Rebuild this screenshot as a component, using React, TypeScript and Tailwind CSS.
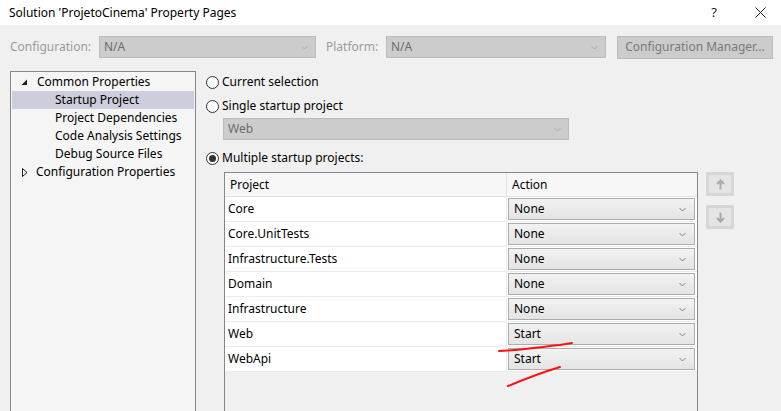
import React from "react";

const font = { fontFamily: '"Noto Sans", "Liberation Sans", sans-serif' };

function Chevron({ color = "#707070" }: { color?: string }) {
  return (
    <svg width="7" height="5" viewBox="0 0 7 5" className="shrink-0">
      <path d="M0.5 1 L3.5 4 L6.5 1" fill="none" stroke={color} strokeWidth="1" />
    </svg>
  );
}

function Radio({ checked, label }: { checked?: boolean; label: string }) {
  return (
    <div className="flex items-center h-[20px]">
      <div className="w-[13px] h-[13px] rounded-full border border-[#333333] bg-white flex items-center justify-center">
        {checked && <div className="w-[7px] h-[7px] rounded-full bg-[#333333]" />}
      </div>
      <span className="ml-[3px] text-[12px] text-black leading-none">{label}</span>
    </div>
  );
}

const rows: [string, string][] = [
  ["Core", "None"],
  ["Core.UnitTests", "None"],
  ["Infrastructure.Tests", "None"],
  ["Domain", "None"],
  ["Infrastructure", "None"],
  ["Web", "Start"],
  ["WebApi", "Start"],
];

export default function App() {
  return (
    <div className="w-[781px] h-[411px] bg-[#f0f0f0] overflow-hidden relative text-[12px] text-black" style={font}>
      {/* Title bar */}
      <div className="h-[25px] bg-white flex items-center pl-[9px] pr-[15px]">
        <span className="text-[12px] text-black">Solution 'ProjetoCinema' Property Pages</span>
        <div className="ml-auto flex items-center gap-[38px]">
          <span className="text-[13px] text-[#222]">?</span>
          <svg width="11" height="11" viewBox="0 0 11 11">
            <path d="M0.5 0.5 L10.5 10.5 M10.5 0.5 L0.5 10.5" stroke="#222" strokeWidth="1" />
          </svg>
        </div>
      </div>

      {/* Config row */}
      <div className="mt-[11px] flex items-center h-[22px] pl-[10px]">
        <span className="w-[89px] text-[#9b9b9b]">Configuration:</span>
        <div className="w-[217px] h-[22px] bg-[#cccccc] border border-[#bcbcbc] flex items-center pl-[4px] pr-[7px]">
          <span className="text-[#6d6d6d]">N/A</span>
          <div className="ml-auto"><Chevron color="#a8a8a8" /></div>
        </div>
        <span className="ml-[10px] w-[60px] text-[#9b9b9b]">Platform:</span>
        <div className="w-[220px] h-[22px] bg-[#cccccc] border border-[#bcbcbc] flex items-center pl-[4px] pr-[7px]">
          <span className="text-[#6d6d6d]">N/A</span>
          <div className="ml-auto"><Chevron color="#a8a8a8" /></div>
        </div>
        <div className="ml-[11px] w-[156px] h-[23px] bg-[#cccccc] border border-[#bcbcbc] flex items-center justify-center text-[#7a7a7a]">
          Configuration Manager...
        </div>
      </div>

      {/* Main */}
      <div className="mt-[13px] flex">
        {/* Tree */}
        <div className="ml-[10px] w-[186px] h-[400px] border border-[#828790] bg-[#f5f5f5] pt-[1px] px-[1px]">
          <div className="h-[18px] flex items-center pl-[9px]">
            <svg width="7" height="7" viewBox="0 0 7 7"><path d="M6 0.5 L6 6 L0.5 6 Z" fill="#1e1e1e" /></svg>
            <span className="ml-[9px]">Common Properties</span>
          </div>
          <div className="h-[18px] flex items-center pl-[43px] bg-[#cccedb]">Startup Project</div>
          <div className="h-[18px] flex items-center pl-[43px]">Project Dependencies</div>
          <div className="h-[18px] flex items-center pl-[43px]">Code Analysis Settings</div>
          <div className="h-[18px] flex items-center pl-[43px]">Debug Source Files</div>
          <div className="h-[18px] flex items-center pl-[10px]">
            <svg width="6" height="9" viewBox="0 0 6 9"><path d="M0.5 0.5 L5 4.5 L0.5 8.5 Z" fill="none" stroke="#1e1e1e" strokeWidth="1" /></svg>
            <span className="ml-[8px]">Configuration Properties</span>
          </div>
        </div>

        {/* Right */}
        <div className="ml-[10px] pt-[1px] flex flex-col">
          <Radio label="Current selection" />
          <div className="mt-[4px]"><Radio label="Single startup project" /></div>
          <div className="mt-[2px] ml-[17px] w-[346px] h-[22px] bg-[#cccccc] border border-[#bcbcbc] flex items-center pl-[4px] pr-[7px]">
            <span className="text-[#6d6d6d]">Web</span>
            <div className="ml-auto"><Chevron color="#a8a8a8" /></div>
          </div>
          <div className="mt-[8px]"><Radio checked label="Multiple startup projects:" /></div>

          <div className="mt-[4px] ml-[18px] flex items-start">
            {/* Grid */}
            <div className="w-[474px] h-[260px] border border-[#828790] bg-[#f0f0f0] flex flex-col">
              <div className="flex h-[24px] bg-[#f7f7f7] border-b border-[#e3e3e3]">
                <div className="w-[282px] border-r border-[#e3e3e3] flex items-center pl-[5px]">Project</div>
                <div className="flex-1 flex items-center pl-[5px]">Action</div>
              </div>
              {rows.map(([name, action]) => (
                <div key={name} className="flex h-[25px] bg-white border-b border-[#ebebeb]">
                  <div className="w-[282px] border-r border-[#ebebeb] flex items-center pl-[3px]">{name}</div>
                  <div className="flex-1 pl-[1px] pr-[2px] pt-[1px]">
                    <div className="h-[22px] border border-[#acacac] bg-gradient-to-b from-[#f2f2f2] to-[#e4e4e4] flex items-center pl-[5px] pr-[8px]">
                      <span>{action}</span>
                      <div className="ml-auto"><Chevron color="#808080" /></div>
                    </div>
                  </div>
                </div>
              ))}
            </div>

            {/* Up / down */}
            <div className="ml-[8px] flex flex-col gap-[9px]">
              <div className="w-[28px] h-[24px] bg-[#d6d6d6] p-[3px]">
                <div className="w-full h-full bg-[#e4e4e4] flex items-center justify-center">
                  <svg width="9" height="11" viewBox="0 0 9 11"><path d="M4.5 10.5 V1.5 M1 5 L4.5 1.5 L8 5" fill="none" stroke="#a9a9a9" strokeWidth="2" /></svg>
                </div>
              </div>
              <div className="w-[28px] h-[24px] bg-[#d6d6d6] p-[3px]">
                <div className="w-full h-full bg-[#e4e4e4] flex items-center justify-center">
                  <svg width="9" height="11" viewBox="0 0 9 11"><path d="M4.5 0.5 V9.5 M1 6 L4.5 9.5 L8 6" fill="none" stroke="#a9a9a9" strokeWidth="2" /></svg>
                </div>
              </div>
            </div>
          </div>
        </div>
      </div>

      {/* Red annotations */}
      <svg className="absolute left-0 top-0 pointer-events-none" width="781" height="411" viewBox="0 0 781 411">
        <path d="M499 351 C520 350 540 347 560 345 L572 343" fill="none" stroke="#ff1010" strokeWidth="2" strokeLinecap="round" />
        <path d="M508 386 C525 379 540 373 560 367" fill="none" stroke="#ff1010" strokeWidth="2" strokeLinecap="round" />
      </svg>
    </div>
  );
}
